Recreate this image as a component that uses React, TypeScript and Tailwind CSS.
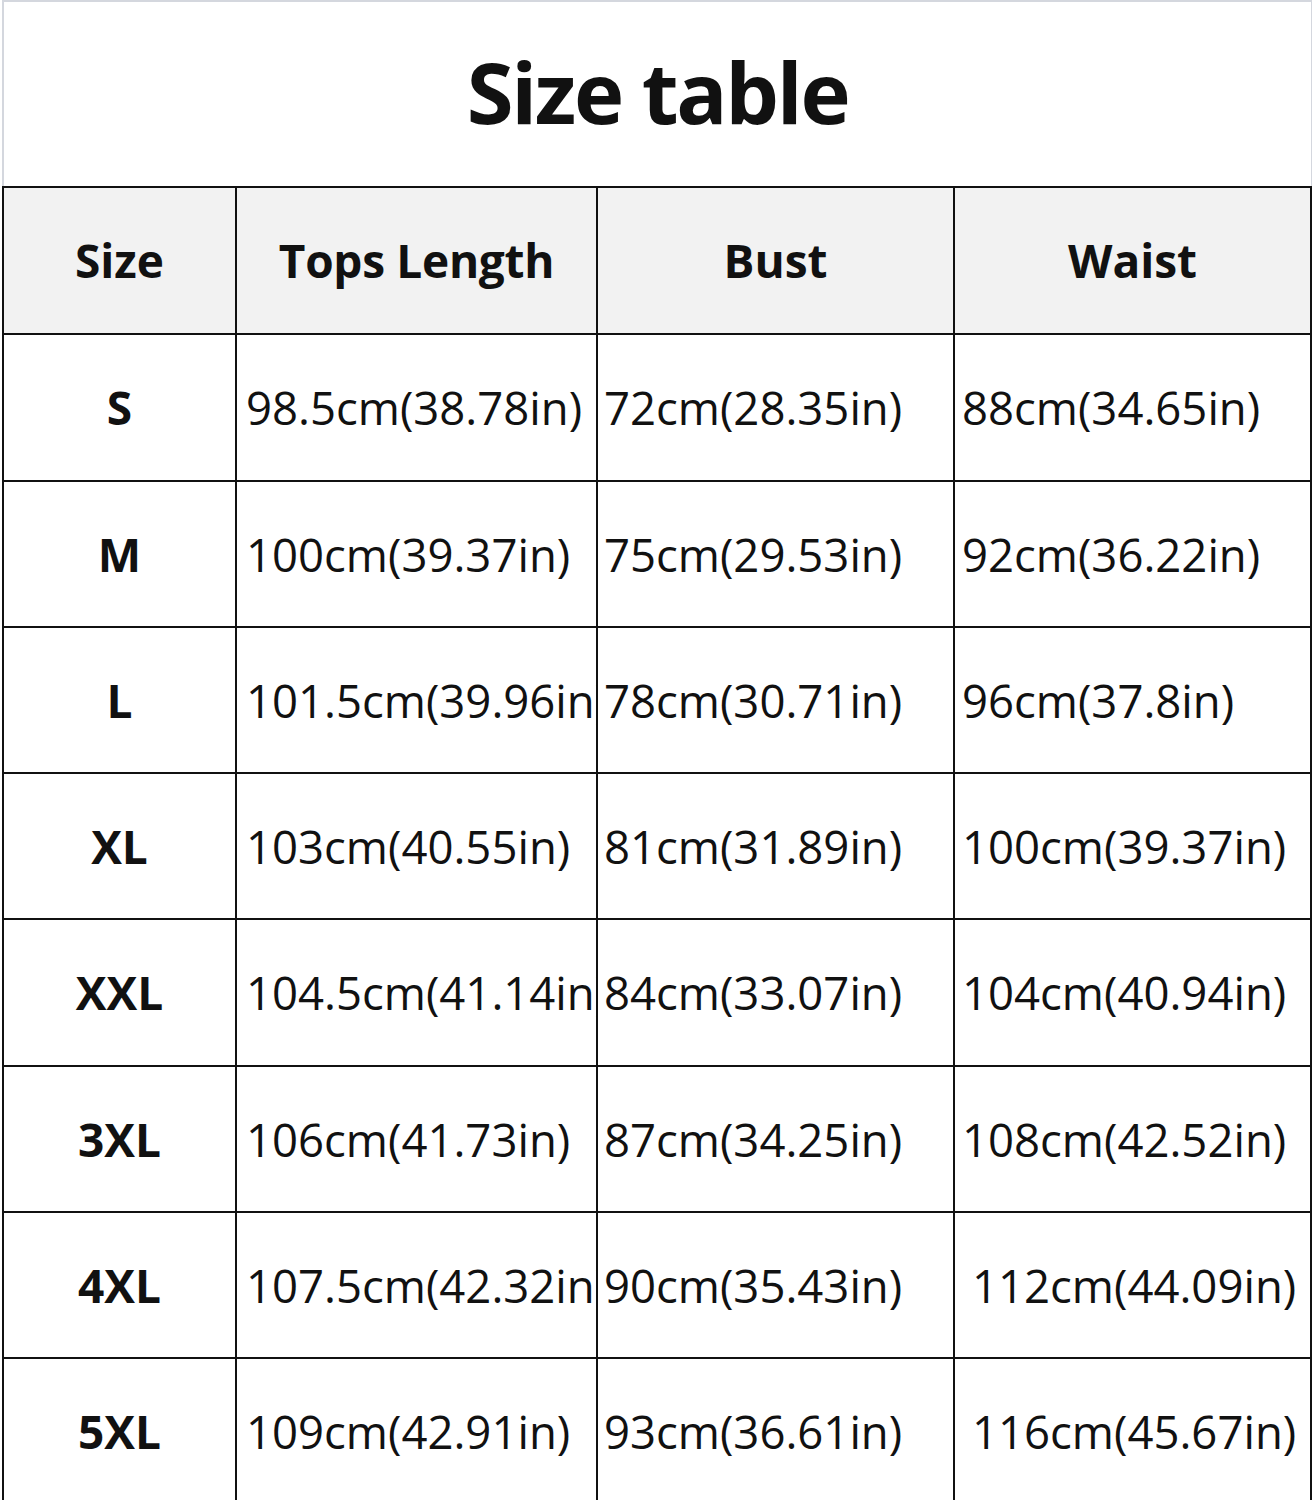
import React from "react";

const rows: { size: string; tops: string; bust: string; waist: string; waistShift?: boolean }[] = [
  { size: "S", tops: "98.5cm(38.78in)", bust: "72cm(28.35in)", waist: "88cm(34.65in)" },
  { size: "M", tops: "100cm(39.37in)", bust: "75cm(29.53in)", waist: "92cm(36.22in)" },
  { size: "L", tops: "101.5cm(39.96in)", bust: "78cm(30.71in)", waist: "96cm(37.8in)" },
  { size: "XL", tops: "103cm(40.55in)", bust: "81cm(31.89in)", waist: "100cm(39.37in)" },
  { size: "XXL", tops: "104.5cm(41.14in)", bust: "84cm(33.07in)", waist: "104cm(40.94in)" },
  { size: "3XL", tops: "106cm(41.73in)", bust: "87cm(34.25in)", waist: "108cm(42.52in)" },
  { size: "4XL", tops: "107.5cm(42.32in)", bust: "90cm(35.43in)", waist: "112cm(44.09in)", waistShift: true },
  { size: "5XL", tops: "109cm(42.91in)", bust: "93cm(36.61in)", waist: "116cm(45.67in)", waistShift: true },
];

export default function App() {
  return (
    <div className="w-[1315px] h-[1500px] overflow-hidden bg-white text-[#111]" style={{ fontFamily: '"Open Sans", "Noto Sans", sans-serif' }}>
      <div className="ml-[2px] w-[1310px] h-[186px] border-t-2 border-l-2 border-r border-[#d4d7de] flex items-center justify-center">
        <h1 className="text-[85px] font-bold tracking-[-2.3px] leading-none -mt-[6px]">Size table</h1>
      </div>
      <div className="ml-[2px] w-[1310px] bg-[#111] p-[2px] grid grid-cols-[231px_359px_355px_355px] grid-rows-[145px_145px_144px_144px_144px_145px_144px_144px_144px] gap-[2px]">
        <div className="bg-[#f2f2f2] flex items-center justify-center text-[46px] font-bold">Size</div>
        <div className="bg-[#f2f2f2] flex items-center justify-center text-[46px] font-bold tracking-[-0.3px]">Tops Length</div>
        <div className="bg-[#f2f2f2] flex items-center justify-center text-[46px] font-bold">Bust</div>
        <div className="bg-[#f2f2f2] flex items-center justify-center text-[46px] font-bold">Waist</div>
        {rows.map((r) => (
          <React.Fragment key={r.size}>
            <div className="bg-white flex items-center justify-center text-[46px] font-bold">{r.size}</div>
            <div className="bg-white flex items-center pl-[9px] text-[45.5px] whitespace-nowrap overflow-hidden">{r.tops}</div>
            <div className="bg-white flex items-center pl-[6px] text-[45.5px] whitespace-nowrap overflow-hidden">{r.bust}</div>
            <div className={`bg-white flex items-center ${r.waistShift ? "pl-[17px]" : "pl-[7px]"} text-[45.5px] whitespace-nowrap overflow-hidden`}>{r.waist}</div>
          </React.Fragment>
        ))}
      </div>
    </div>
  );
}
